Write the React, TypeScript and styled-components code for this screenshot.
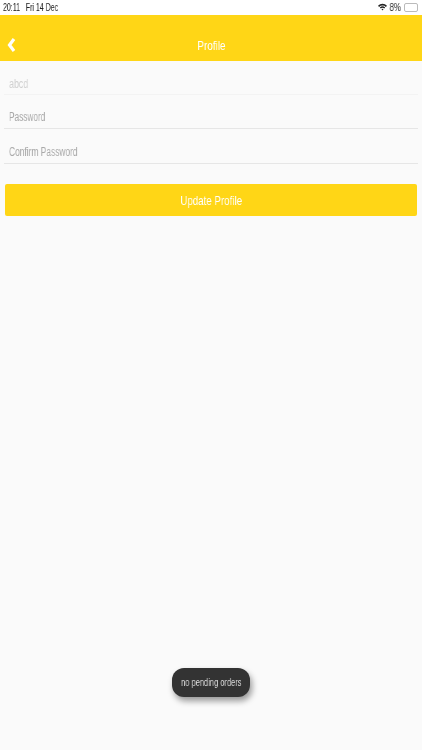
import React from "react";
import styled, { createGlobalStyle } from "styled-components";

const GlobalStyle = createGlobalStyle`
  html, body {
    margin: 0;
    padding: 0;
    background: #fafafa;
    font-family: "Liberation Sans", Arial, sans-serif;
  }
`;

const Page = styled.div`
  position: relative;
  width: 422px;
  height: 750px;
  overflow: hidden;
  background: #fafafa;
  display: flex;
  flex-direction: column;
`;

const StatusBar = styled.div`
  height: 15px;
  background: #fff;
  display: flex;
  align-items: center;
  justify-content: space-between;
  padding: 0 4px 1px 3px;
  box-sizing: border-box;
  color: #222;
`;

const Narrow = styled.span<{ $scale?: number; $origin?: string }>`
  display: inline-block;
  white-space: pre;
  will-change: transform;
  transform: scaleX(${(p) => p.$scale ?? 0.75});
  transform-origin: ${(p) => p.$origin ?? "center"};
`;

const StatusText = styled.span`
  font-size: 10px;
  display: inline-block;
`;

const StatusRight = styled.div`
  display: flex;
  align-items: center;
  gap: 1px;
`;

const Battery = styled.div`
  width: 12px;
  height: 7px;
  border: 1px solid #bbb;
  border-radius: 2px;
  margin-left: 1px;
`;

const Header = styled.header`
  height: 46px;
  box-sizing: border-box;
  padding-top: 14px;
  background: #ffd616;
  display: flex;
  align-items: center;
  justify-content: center;
  position: relative;
  color: #fff;
  font-size: 13px;
`;

const BackButton = styled.div`
  position: absolute;
  left: 7px;
  top: 22px;
  height: 16px;
  display: flex;
`;

const Form = styled.div`
  display: flex;
  flex-direction: column;
  padding: 0 4px;
`;

const Field = styled.div<{ $height: number; $muted?: boolean }>`
  height: ${(p) => p.$height}px;
  box-sizing: border-box;
  border-bottom: 1px solid ${(p) => (p.$muted ? "#f3f3f3" : "#e6e6e6")};
  color: ${(p) => (p.$muted ? "#cfcfcf" : "#a9a9a9")};
  font-size: 12px;
  padding: 0 0 ${(p) => (p.$muted ? 1 : 2)}px 5px;
  display: flex;
  align-items: flex-end;
  line-height: 17px;
`;

const SubmitButton = styled.div`
  margin: 20px 1px 0;
  height: 32px;
  border-radius: 2px;
  background: #ffd616;
  color: #fff;
  font-size: 13px;
  display: flex;
  align-items: center;
  justify-content: center;
`;

const Toast = styled.div`
  position: absolute;
  left: 172px;
  top: 668px;
  width: 78px;
  height: 29px;
  border-radius: 12px;
  background: #333;
  color: #ddd;
  font-size: 10px;
  display: flex;
  align-items: center;
  justify-content: center;
  box-shadow: 2px 4px 6px rgba(0, 0, 0, 0.4);
`;

const App = () => {
  return (
    <Page>
      <GlobalStyle />
      <StatusBar>
        <StatusText>
          <Narrow $origin="left" $scale={0.7}>20:11   Fri 14 Dec</Narrow>
        </StatusText>
        <StatusRight>
          <svg width="9" height="8" viewBox="0 0 10 8">
            <path d="M0 2.6 A7 7 0 0 1 10 2.6 L8.8 3.9 A5.3 5.3 0 0 0 1.2 3.9 Z" fill="#222" />
            <path d="M2 4.6 A4.3 4.3 0 0 1 8 4.6 L6.9 5.8 A2.8 2.8 0 0 0 3.1 5.8 Z" fill="#222" />
            <path d="M3.9 6.5 A1.6 1.6 0 0 1 6.1 6.5 L5 7.8 Z" fill="#222" />
          </svg>
          <StatusText>
            <Narrow $scale={0.78}>8%</Narrow>
          </StatusText>
          <Battery />
        </StatusRight>
      </StatusBar>
      <Header>
        <BackButton>
          <svg width="9" height="16" viewBox="0 0 9 16">
            <path d="M7 2 L2.5 8 L7 14" fill="none" stroke="#fff" strokeWidth="3.2" />
          </svg>
        </BackButton>
        <Narrow $scale={0.77}>Profile</Narrow>
      </Header>
      <Form>
        <Field $height={34} $muted>
          <Narrow $origin="left" $scale={0.74}>abcd</Narrow>
        </Field>
        <Field $height={34}>
          <Narrow $origin="left" $scale={0.69}>Password</Narrow>
        </Field>
        <Field $height={35}>
          <Narrow $origin="left" $scale={0.7}>Confirm Password</Narrow>
        </Field>
        <SubmitButton>
          <Narrow>Update Profile</Narrow>
        </SubmitButton>
      </Form>
      <Toast>
        <Narrow>no pending orders</Narrow>
      </Toast>
    </Page>
  );
};

export default App;
